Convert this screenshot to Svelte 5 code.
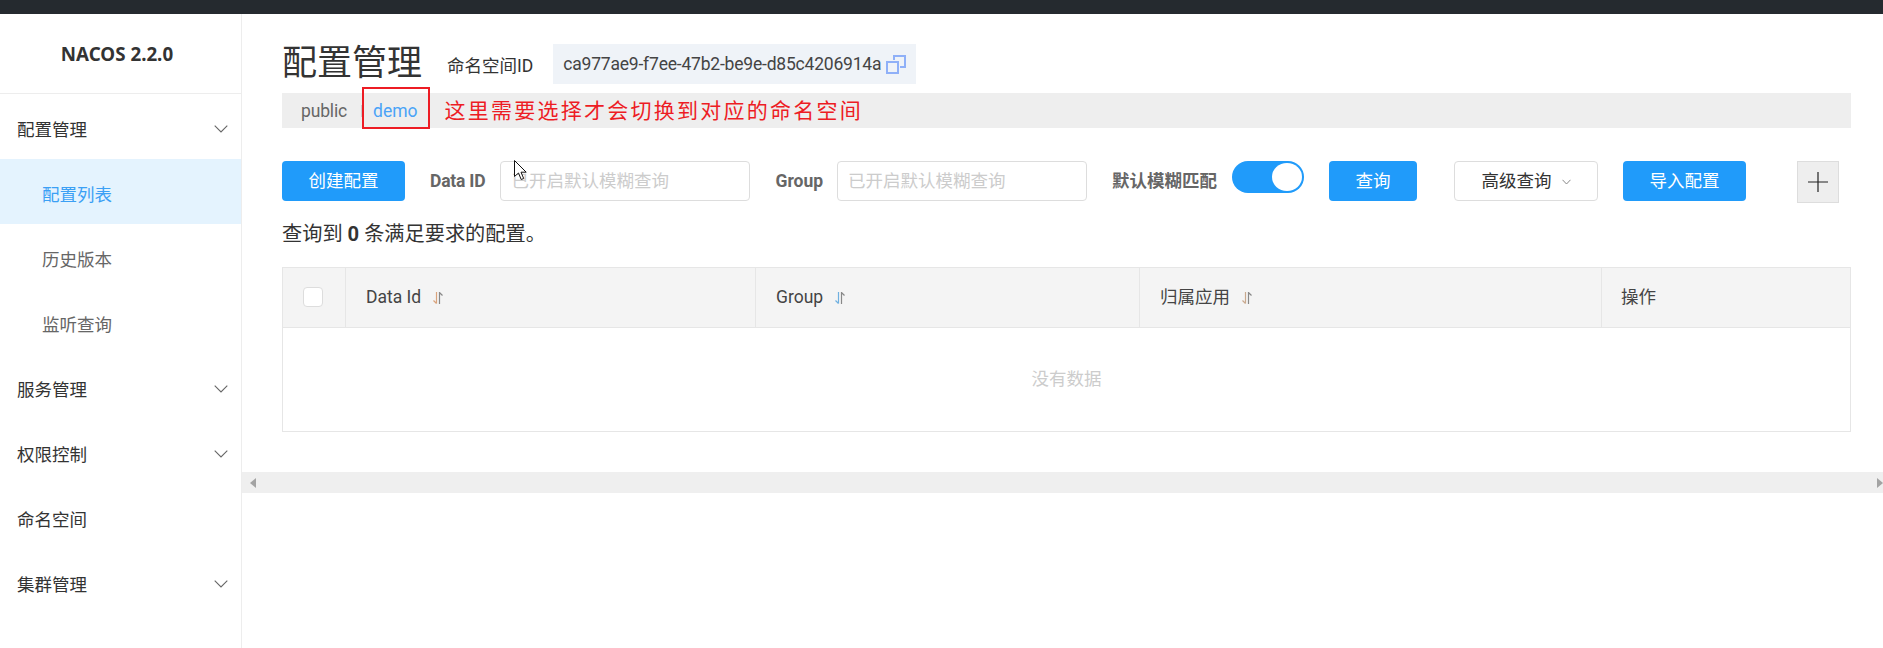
<script>
  const menu = [
    { label: '配置管理', arrow: true },
    { label: '配置列表', sub: true, active: true },
    { label: '历史版本', sub: true },
    { label: '监听查询', sub: true },
    { label: '服务管理', arrow: true },
    { label: '权限控制', arrow: true },
    { label: '命名空间' },
    { label: '集群管理', arrow: true }
  ]
  const placeholder = '已开启默认模糊查询'
</script>

<div class="topbar"></div>
<div class="page">
  <aside class="sidebar">
    <div class="brand">NACOS 2.2.0</div>
    <nav>
      {#each menu as item}
        <div class="item" class:sub={item.sub} class:active={item.active}>
          <span>{item.label}</span>
          {#if item.arrow}
            <svg class="chev" width="14" height="8" viewBox="0 0 14 8"><path d="M.7.7 7 7 13.3.7" fill="none" stroke="#666" stroke-width="1.1" /></svg>
          {/if}
        </div>
      {/each}
    </nav>
  </aside>

  <main class="main">
    <div class="content">
      <div class="head">
        <h1>配置管理</h1>
        <span class="ns-label">命名空间ID</span>
        <div class="ns-id">
          <span class="uuid">ca977ae9-f7ee-47b2-be9e-d85c4206914a</span>
          <svg width="20" height="19" viewBox="0 0 20 19" fill="none" stroke="#8fb0f8" stroke-width="2">
            <path d="M8 5V1h11v11h-5" />
            <rect x="1" y="7" width="11" height="11" />
          </svg>
        </div>
      </div>

      <div class="crumbs">
        <span class="pub">public</span>
        <span class="sep"></span>
        <span class="demo">demo</span>
        <span class="note">这里需要选择才会切换到对应的命名空间</span>
        <span class="redbox"></span>
      </div>

      <div class="toolbar">
        <button class="btn primary create">创建配置</button>
        <span class="label l-data">Data ID</span>
        <div class="input">{placeholder}</div>
        <span class="label l-group">Group</span>
        <div class="input">{placeholder}</div>
        <span class="label l-fuzzy">默认模糊匹配</span>
        <div class="toggle"><i></i></div>
        <button class="btn primary query">查询</button>
        <button class="btn adv">高级查询
          <svg width="9" height="6" viewBox="0 0 9 6"><path d="M.5.8 4.500 5 8.500.8" fill="none" stroke="#888" /></svg>
        </button>
        <button class="btn primary import">导入配置</button>
        <div class="plus">
          <svg width="20" height="20" viewBox="0 0 20 20"><path d="M10 0v20M0 10h20" stroke="#222" stroke-width="1.2" /></svg>
        </div>
      </div>

      <p class="count">查询到 <strong>0</strong> 条满足要求的配置。</p>

      <div class="table">
        <div class="thead">
          <div class="th c-check"><span class="check"></span></div>
          <div class="th c-id">Data Id {@render sort('#d9a37c')}</div>
          <div class="th c-group">Group {@render sort('#6fb0e0')}</div>
          <div class="th c-app">归属应用 {@render sort('#c9a98e')}</div>
          <div class="th c-op">操作</div>
        </div>
        <div class="empty">没有数据</div>
      </div>
    </div>

    <div class="scrollbar">
      <svg width="6" height="10" viewBox="0 0 6 10"><path d="M6 0v10L0 5z" fill="#a3a3a3" /></svg>
      <svg width="6" height="10" viewBox="0 0 6 10"><path d="M0 0v10l6-5z" fill="#a3a3a3" /></svg>
    </div>
  </main>
</div>

<svg class="cursor" width="13" height="21" viewBox="0 0 13 21"><path d="M.5.5v16l4-3.500 2.700 6.500 2.500-1-2.700-6.300h5.200z" fill="#fff" stroke="#111" /></svg>

{#snippet sort(tint)}
  <svg class="sort" width="10" height="12" viewBox="0 0 10 12" fill="none" stroke-width="1.2">
    <path d="M3.500 0v11.500M.5 8.500l3 3" stroke={tint} />
    <path d="M6.500 12V.5l3 3" stroke="#888" />
  </svg>
{/snippet}

<style>
  :global(body) {
    margin: 0;
    overflow: hidden;
    background: #fff;
  }
  :global(#app) {
    position: relative;
    height: 648px;
    overflow: hidden;
    font-family: Roboto, "Noto Sans CJK SC", sans-serif;
    font-size: 17.5px;
    color: #333;
  }
  .topbar {
    height: 14px;
    background: #252a2f;
  }
  .page {
    display: flex;
    height: 634px;
  }
  .sidebar {
    flex: 0 0 241px;
    border-right: 1px solid #ededed;
  }
  .brand {
    height: 79px;
    box-sizing: content-box;
    padding-right: 7px;
    line-height: 80px;
    border-bottom: 1px solid #ededed;
    text-align: center;
    font-family: "Noto Sans", sans-serif;
    font-size: 18.75px;
    font-weight: 700;
    color: #333;
  }
  .item {
    display: flex;
    justify-content: space-between;
    align-items: center;
    height: 65px;
    box-sizing: border-box;
    padding: 4px 13px 0 17px;
    color: #333;
  }
  .item.sub {
    padding-left: 42px;
    color: #666;
  }
  .item.active {
    background: #e4f3fe;
    color: #3ba0f5;
  }
  .main {
    flex: 1;
    min-width: 0;
  }
  .content {
    padding: 30px 32px 0 40px;
    height: 428px;
    box-sizing: border-box;
  }
  .head {
    display: flex;
    align-items: center;
    height: 40px;
  }
  h1 {
    margin: 0 25px 0 0;
    font-size: 35px;
    font-weight: 400;
    color: #333;
    line-height: 40px;
  }
  .ns-label {
    margin-right: 20px;
  }
  .ns-id {
    display: flex;
    align-items: center;
    gap: 5px;
    height: 40px;
    padding: 0 10px;
    background: #eff3f8;
    color: #444;
  }
  .uuid {
    letter-spacing: -0.2px;
  }
  .crumbs {
    position: relative;
    display: flex;
    align-items: center;
    height: 35px;
    margin-top: 9px;
    padding-left: 19px;
    background: #eee;
  }
  .pub {
    color: #666;
    letter-spacing: -0.15px;
  }
  .sep {
    width: 1px;
    height: 12px;
    margin: 0 11px 0 14px;
    background: #ccc;
  }
  .demo {
    color: #4aa3f7;
  }
  .note {
    margin: 0 0 3px 27px;
    font-size: 21px;
    letter-spacing: 2.24px;
    color: #ed1c24;
    font-family: "Noto Sans CJK SC", sans-serif;
  }
  .redbox {
    position: absolute;
    left: 80px;
    top: -6px;
    width: 64px;
    height: 38px;
    border: 2px solid #ed1c24;
  }
  .toolbar {
    display: flex;
    align-items: flex-start;
    margin-top: 33px;
    height: 42px;
  }
  .btn {
    height: 40px;
    border-radius: 4px;
    border: 1px solid #ddd;
    background: #fff;
    color: #333;
    font: inherit;
    padding: 0 0 3px;
  }
  .btn.primary {
    border: 0;
    background: #209bfa;
    color: #fff;
  }
  .create {
    width: 123px;
  }
  .label {
    line-height: 40px;
    font-weight: 700;
    color: #666;
  }
  .l-data {
    margin: 0 15px 0 25px;
    letter-spacing: -0.2px;
  }
  .l-group {
    margin: 0 14px 0 25px;
  }
  .l-fuzzy {
    margin: 0 15px 0 25px;
  }
  .input {
    width: 250px;
    height: 40px;
    box-sizing: border-box;
    border: 1px solid #ddd;
    border-radius: 4px;
    padding-left: 10px;
    line-height: 38px;
    color: #ccc;
  }
  .toggle {
    position: relative;
    width: 72px;
    height: 32px;
    border-radius: 16px;
    background: #209bfa;
  }
  .toggle i {
    position: absolute;
    right: 2px;
    top: 2px;
    width: 30px;
    height: 28px;
    border-radius: 50%;
    background: #fff;
  }
  .query {
    width: 88px;
    margin-left: 25px;
  }
  .adv {
    width: 144px;
    margin-left: 37px;
  }
  .adv svg {
    margin: 0 0 2px 6px;
  }
  .import {
    width: 123px;
    margin-left: 25px;
  }
  .plus {
    display: flex;
    align-items: center;
    justify-content: center;
    width: 42px;
    height: 42px;
    box-sizing: border-box;
    margin-left: 51px;
    border: 1px solid #ddd;
    background: #eee;
  }
  .count {
    margin: 17px 0 0;
    font-size: 20.2px;
    line-height: 28px;
    color: #333;
  }
  .table {
    margin-top: 19px;
    border: 1px solid #e6e6e6;
  }
  .thead {
    display: grid;
    grid-template-columns: 63px 410px 384px 462px 1fr;
    height: 59px;
    background: #f4f4f4;
    border-bottom: 1px solid #e6e6e6;
  }
  .th {
    display: flex;
    align-items: center;
    gap: 12px;
    padding: 0 0 1px 20px;
    border-right: 1px solid #e6e6e6;
    color: #444;
  }
  .c-check {
    justify-content: center;
    padding: 0 3px 2px 0;
  }
  .c-app,
  .c-op {
    padding-bottom: 4px;
  }
  .c-op {
    border-right: 0;
    padding-left: 19px;
  }
  .check {
    width: 20px;
    height: 20px;
    box-sizing: border-box;
    border: 1px solid #ddd;
    border-radius: 4px;
    background: #fff;
  }
  .sort {
    margin-top: 2px;
  }
  .c-app .sort {
    margin-top: 5px;
  }
  .empty {
    height: 103px;
    line-height: 103px;
    text-align: center;
    color: #ccc;
  }
  .scrollbar {
    display: flex;
    justify-content: space-between;
    align-items: center;
    height: 21px;
    margin-top: 30px;
    padding: 0 0 0 8px;
    background: #efefef;
  }
  .cursor {
    position: absolute;
    left: 514px;
    top: 160px;
  }
</style>
